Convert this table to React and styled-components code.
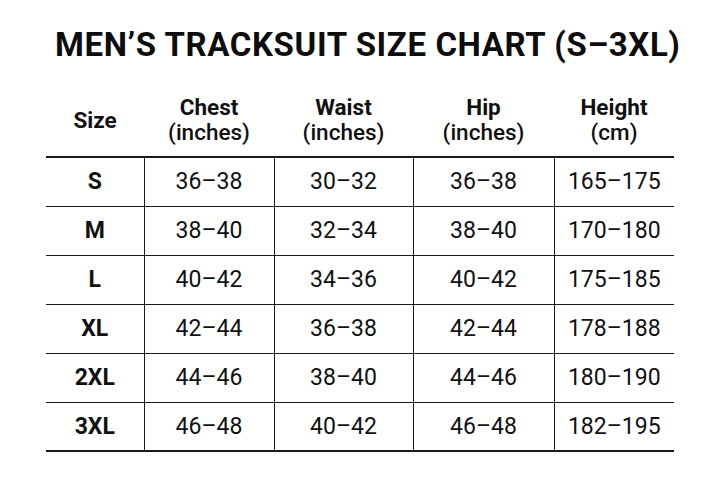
import React from "react";
import styled, { createGlobalStyle } from "styled-components";

const GlobalStyle = createGlobalStyle`
  html, body {
    margin: 0;
    padding: 0;
    background: #ffffff;
  }
  body {
    font-family: Roboto, "Liberation Sans", Arial, sans-serif;
    color: #111111;
  }
`;

const sizeData = [
  { size: "S", chest: "36–38", waist: "30–32", hip: "36–38", height: "165–175" },
  { size: "M", chest: "38–40", waist: "32–34", hip: "38–40", height: "170–180" },
  { size: "L", chest: "40–42", waist: "34–36", hip: "40–42", height: "175–185" },
  { size: "XL", chest: "42–44", waist: "36–38", hip: "42–44", height: "178–188" },
  { size: "2XL", chest: "44–46", waist: "38–40", hip: "44–46", height: "180–190" },
  { size: "3XL", chest: "46–48", waist: "40–42", hip: "46–48", height: "182–195" },
];

const columns = [
  { key: "size", label: "Size", width: 98 },
  { key: "chest", label: "Chest", unit: "(inches)", width: 130 },
  { key: "waist", label: "Waist", unit: "(inches)", width: 139 },
  { key: "hip", label: "Hip", unit: "(inches)", width: 141 },
  { key: "height", label: "Height", unit: "(cm)", width: 120 },
];

export default function App() {
  return (
    <>
      <GlobalStyle />
      <Page>
        <Title>MEN’S TRACKSUIT SIZE CHART (S–3XL)</Title>
        <ChartTable>
          <colgroup>
            {columns.map((col) => (
              <col key={col.key} style={{ width: col.width }} />
            ))}
          </colgroup>
          <thead>
            <tr>
              {columns.map((col) => (
                <HeadCell key={col.key}>
                  {col.label}
                  {col.unit && (
                    <>
                      <br />
                      <Unit>{col.unit}</Unit>
                    </>
                  )}
                </HeadCell>
              ))}
            </tr>
          </thead>
          <tbody>
            {sizeData.map((row) => (
              <Row key={row.size}>
                {columns.map((col, i) => (
                  <Cell key={col.key} $bold={i === 0}>
                    {row[col.key]}
                  </Cell>
                ))}
              </Row>
            ))}
          </tbody>
        </ChartTable>
      </Page>
    </>
  );
}

const Page = styled.div`
  width: 720px;
  height: 480px;
  box-sizing: border-box;
  padding: 22px 46px 0 46px;
  overflow: hidden;
`;

const Title = styled.h1`
  margin: 0;
  padding-left: 9px;
  font-size: 33px;
  line-height: 46px;
  font-weight: 700;
  letter-spacing: 0.6px;
  color: #0d0d0d;
  white-space: nowrap;
`;

const ChartTable = styled.table`
  margin-top: 16px;
  width: 628px;
  border-collapse: collapse;
  table-layout: fixed;
`;

const HeadCell = styled.th`
  height: 72px;
  padding: 0;
  font-size: 22.5px;
  line-height: 25px;
  font-weight: 700;
  text-align: center;
  vertical-align: middle;
  border-bottom: 2px solid #1a1a1a;
`;

const Unit = styled.span`
  font-weight: 500;
`;

const Row = styled.tr`
  height: 49px;

  & + & td {
    border-top: 1.5px solid #1a1a1a;
  }

  &:last-child td {
    border-bottom: 2px solid #1a1a1a;
  }
`;

const Cell = styled.td`
  padding: 0;
  text-align: center;
  vertical-align: middle;
  font-size: 23px;
  font-weight: ${({ $bold }) => ($bold ? 700 : 400)};
  color: #111111;

  & + & {
    border-left: 1px solid #1a1a1a;
  }
`;
